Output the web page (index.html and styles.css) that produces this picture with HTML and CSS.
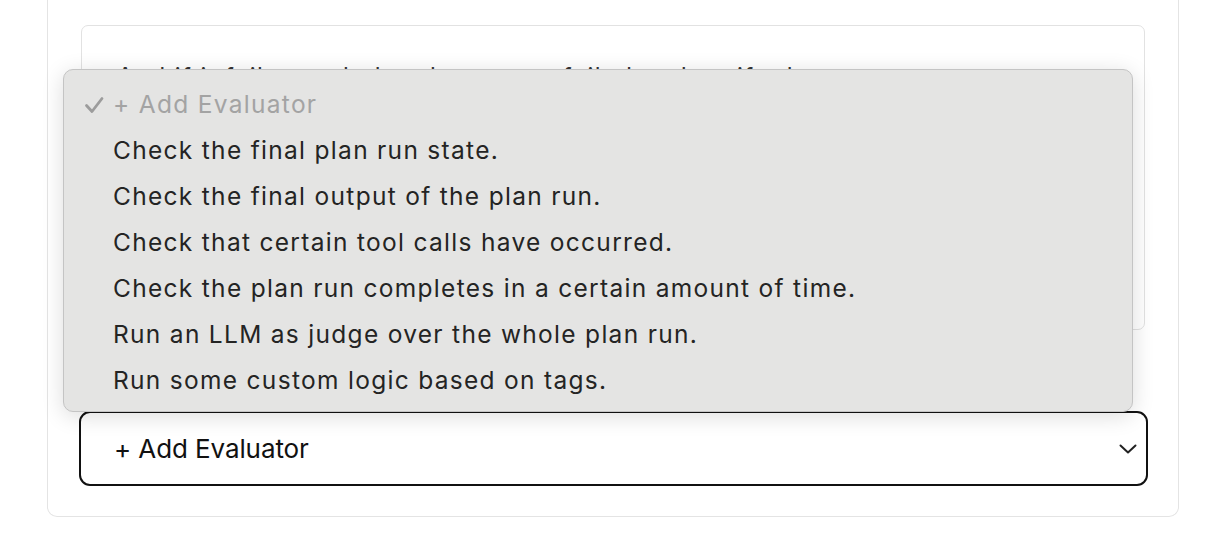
FILE: index.html
```html
<!DOCTYPE html>
<html>
<head>
<meta charset="utf-8">
<link rel="stylesheet" href="styles.css">
</head>
<body>
<div class="card">
  <div class="textarea">
    <p class="ta-text">And if it fails, mark the plan run as failed and notify the team</p>
  </div>
  <div class="select">
    <span class="select-label">+ Add Evaluator</span>
    <svg class="chev" width="18" height="10" viewBox="0 0 18 10"><path d="M1.5 1.5 L9 8.5 L16.5 1.5" fill="none" stroke="#222" stroke-width="2" stroke-linecap="round" stroke-linejoin="round"/></svg>
  </div>
</div>
<div class="menu">
  <div class="item selected"><svg class="check" width="20" height="18" viewBox="0 0 20 18"><path d="M2.5 9.5 L8 15.5 L18 2.5" fill="none" stroke="#9c9c9c" stroke-width="2.8" stroke-linecap="round" stroke-linejoin="round"/></svg>+ Add Evaluator</div>
  <div class="item">Check the final plan run state.</div>
  <div class="item">Check the final output of the plan run.</div>
  <div class="item">Check that certain tool calls have occurred.</div>
  <div class="item">Check the plan run completes in a certain amount of time.</div>
  <div class="item">Run an LLM as judge over the whole plan run.</div>
  <div class="item">Run some custom logic based on tags.</div>
</div>
</body>
</html>
```

FILE: styles.css
```css
html, body {
  margin: 0;
  padding: 0;
  background: #ffffff;
  font-family: Inter, "Noto Sans", sans-serif;
}
body {
  position: relative;
  width: 1216px;
  height: 546px;
  overflow: hidden;
}
.card {
  margin-left: 47px;
  width: 1132px;
  border: 1px solid #e4e4e4;
  border-top: 0;
  border-radius: 0 0 10px 10px;
  padding: 25px 32px 30px 33px;
  box-sizing: border-box;
  height: 517px;
}
.textarea {
  height: 305px;
  border: 1px solid #e2e2e2;
  border-radius: 7px;
  box-sizing: border-box;
  padding: 36px 35px;
  margin-right: 1px;
}
.ta-text {
  margin: 0;
  font-size: 24px;
  color: #333;
  letter-spacing: 1.4px;
}
.select {
  margin: 81px -2px 0 -2px;
  height: 75px;
  border: 2px solid #111;
  border-radius: 11px;
  box-sizing: border-box;
  display: flex;
  align-items: center;
  justify-content: space-between;
  padding: 0 9px 0 33px;
}
.select-label {
  font-size: 26px;
  color: #111;
  letter-spacing: -0.1px;
}
.chev {
  display: block;
}
.menu {
  position: absolute;
  left: 63px;
  top: 69px;
  width: 1070px;
  height: 343px;
  box-sizing: border-box;
  background: #e4e4e3;
  border: 1px solid #c4c4c4;
  border-radius: 10px;
  box-shadow: 0 4px 22px rgba(0, 0, 0, 0.14);
  padding: 11px 0 10px 0;
}
.item {
  height: 46px;
  line-height: 46px;
  font-size: 24.5px;
  color: #242424;
  padding-left: 49px;
  position: relative;
  letter-spacing: 1.3px;
}
.item.selected {
  color: #a3a3a3;
}
.check {
  position: absolute;
  left: 20px;
  top: 15px;
}
```
